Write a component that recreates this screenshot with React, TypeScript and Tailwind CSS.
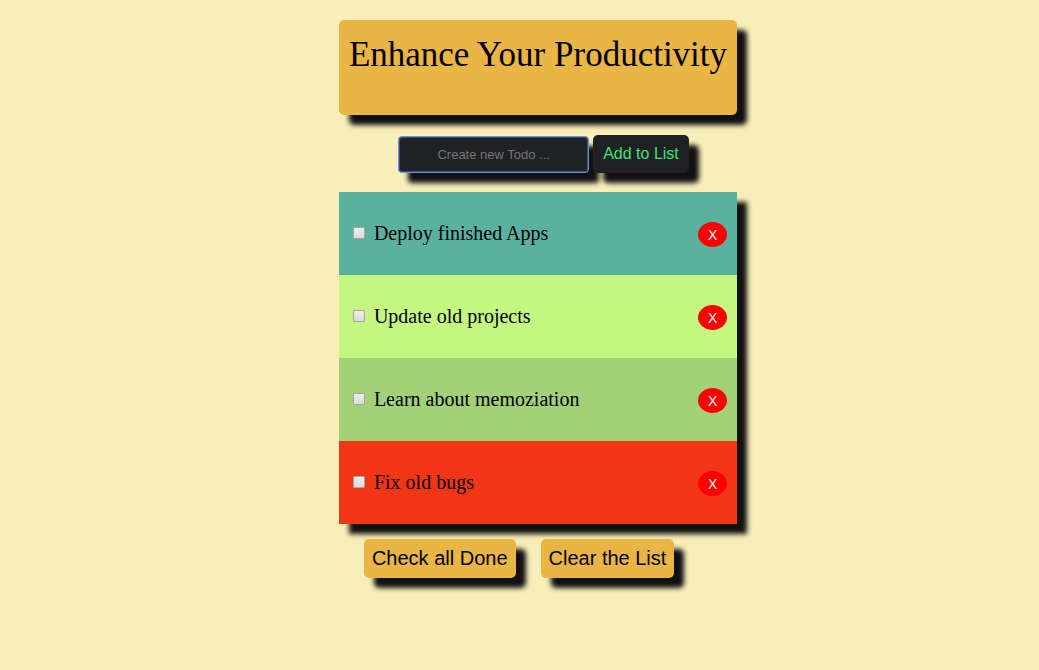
import { useState } from "react";

const initialTodos = [
  { id: 1, text: "Deploy finished Apps", color: "bg-[#5ab1a0]" },
  { id: 2, text: "Update old projects", color: "bg-[#c4f681]" },
  { id: 3, text: "Learn about memoziation", color: "bg-[#a2d17a]" },
  { id: 4, text: "Fix old bugs", color: "bg-[#f23515]" },
];

const shadow = "shadow-[10px_10px_5px_#111111]";

export default function App() {
  const [todos, setTodos] = useState(initialTodos);
  const [done, setDone] = useState<number[]>([]);
  const [draft, setDraft] = useState("");

  const add = () => {
    if (!draft.trim()) return;
    setTodos([...todos, { id: Date.now(), text: draft, color: "bg-[#5ab1a0]" }]);
    setDraft("");
  };

  const toggle = (id: number) =>
    setDone(done.includes(id) ? done.filter((d) => d !== id) : [...done, id]);

  return (
    <div className="flex min-h-screen justify-center bg-[#f8eeba] py-5 pl-[37px] font-['Liberation_Sans',Arial,sans-serif] text-black">
      <main className="flex w-fit flex-col">
        <header className={`rounded-[5px] bg-[#e9b544] px-2.5 pt-[15px] pb-10 ${shadow}`}>
          <h1 className="font-['Liberation_Serif','Times_New_Roman',serif] text-[35px] leading-10 whitespace-nowrap">
            Enhance Your Productivity
          </h1>
        </header>

        <form
          className="mt-5 flex items-end justify-center gap-1 pl-[11px]"
          onSubmit={(e) => {
            e.preventDefault();
            add();
          }}
        >
          <input
            aria-label="New todo"
            placeholder="Create new Todo ..."
            value={draft}
            onChange={(e) => setDraft(e.target.value)}
            className="h-[37px] w-[191px] rounded-[4px] border border-[#6c94d2] bg-[#202124] text-center text-[13px] text-[#3be477] shadow-[inset_0_0_0_1px_#2f4f85,10px_10px_5px_#111111] outline-none placeholder:text-[#757575]"
          />
          <button
            type="submit"
            className={`rounded-[5px] bg-[#202124] px-2.5 py-[9px] text-base leading-5 text-[#3be477] ${shadow}`}
          >
            Add to List
          </button>
        </form>

        <ul className={`mt-[19px] ${shadow}`}>
          {todos.map((todo) => (
            <li key={todo.id} className={`flex h-[83px] items-center justify-between pr-2.5 pb-px pl-3.5 ${todo.color}`}>
              <label className="flex items-center gap-[9px] font-['Liberation_Serif','Times_New_Roman',serif] text-xl">
                <input
                  type="checkbox"
                  checked={done.includes(todo.id)}
                  onChange={() => toggle(todo.id)}
                  className="size-3 appearance-none rounded-[1px] border border-[#a6a6a6] bg-linear-to-b from-[#ededed] to-[#dcdcdc] checked:from-[#555555] checked:to-[#333333]"
                />
                {todo.text}
              </label>
              <button
                type="button"
                aria-label={`Delete ${todo.text}`}
                onClick={() => setTodos(todos.filter((t) => t.id !== todo.id))}
                className="mt-[3px] h-[25px] w-[29px] rounded-[50%] bg-[#ff0000] text-sm leading-5 text-white"
              >
                X
              </button>
            </li>
          ))}
        </ul>

        <div className="mt-[15px] flex gap-[25px] pl-[25px]">
          <button
            type="button"
            onClick={() => setDone(todos.map((t) => t.id))}
            className={`rounded-[5px] bg-[#e9b544] px-2 py-2 text-xl leading-[23px] ${shadow}`}
          >
            Check all Done
          </button>
          <button
            type="button"
            onClick={() => setTodos([])}
            className={`rounded-[5px] bg-[#e9b544] px-2 py-2 text-xl leading-[23px] ${shadow}`}
          >
            Clear the List
          </button>
        </div>
      </main>
    </div>
  );
}
